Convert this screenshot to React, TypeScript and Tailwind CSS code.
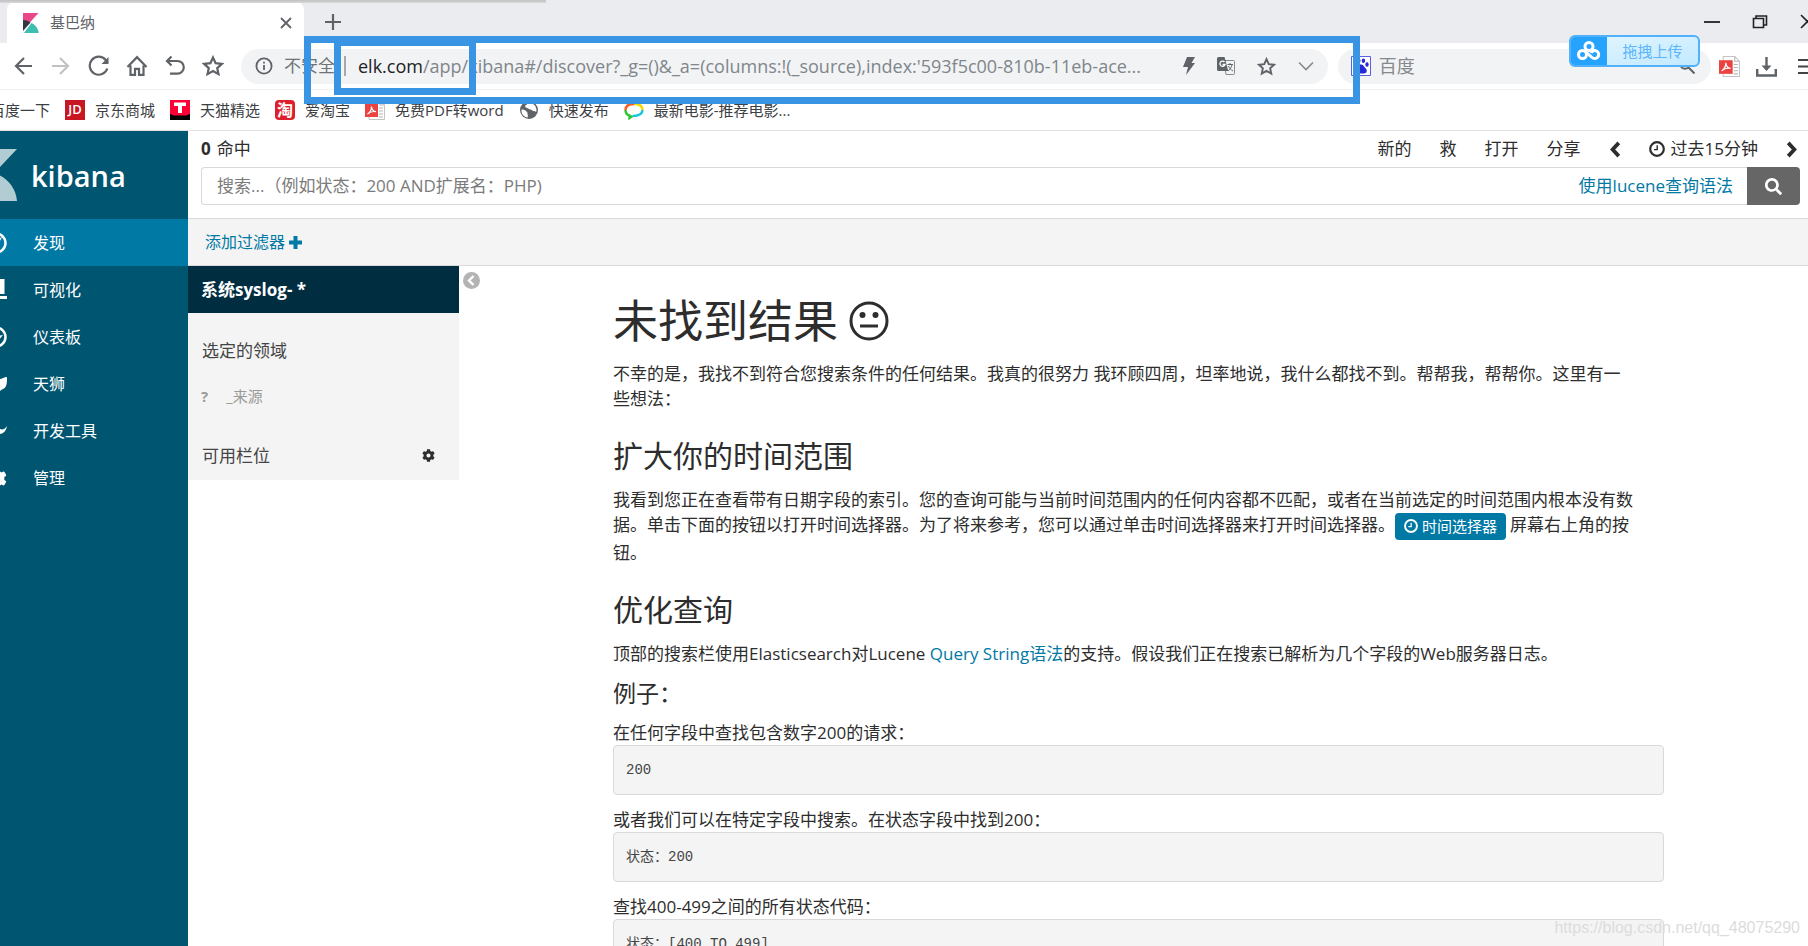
import type { ReactNode } from "react";
import { FaCog, FaSearch } from "react-icons/fa";

interface NavItem {
  label: string;
  icon: ReactNode;
}

interface Bookmark {
  label: string;
  icon: ReactNode;
}

interface Example {
  title: string;
  code: string;
}

/* ---------- shared icons ---------- */

function ClockIcon({ className }: { className: string }) {
  return (
    <svg viewBox="0 0 16 16" className={className} fill="none" stroke="currentColor" aria-hidden>
      <circle cx="8" cy="8" r="6.8" strokeWidth="2.2" />
      <path d="M8.2 4.2v4.4H5" strokeWidth="1.4" />
    </svg>
  );
}

function ChevronIcon({ direction }: { direction: "left" | "right" }) {
  return (
    <svg viewBox="0 0 12 18" className="h-[17px] w-3" fill="none" stroke="currentColor" strokeWidth="4" aria-hidden>
      <path d={direction === "left" ? "M10 2 3.5 9l6.5 7" : "m2 2 6.5 7L2 16"} />
    </svg>
  );
}

function PdfIcon({ className }: { className: string }) {
  return (
    <svg viewBox="0 0 20 20" className={className} aria-hidden>
      <path d="M4 .5h11L19.5 5v14.5H4z" fill="#fff" stroke="#c4c4c4" />
      <path d="M15 .5V5h4.5M14 8h4M14 11h4M14 14h4M14 17h4" fill="none" stroke="#b5b5b5" />
      <path d="M0 4h13v13H0z" fill="#ea4340" />
      <path d="M2.5 14c3-1.5 4-4.5 4-7.5.3 3 2 5 4.5 5.2-3-.6-6 .3-8.5 2.3z" fill="none" stroke="#fff" strokeWidth="1.2" />
    </svg>
  );
}

function StarIcon({ className }: { className: string }) {
  return (
    <svg viewBox="0 0 22 22" className={className} fill="none" stroke="currentColor" strokeWidth="2.2" aria-hidden>
      <path d="m11 2.5 2.6 5.7 6.2.7-4.6 4.2 1.3 6.1L11 16.1l-5.5 3.1 1.3-6.1L2.2 8.9l6.2-.7z" />
    </svg>
  );
}

/* ---------- browser chrome ---------- */

function TabStrip() {
  return (
    <div className="flex h-[43px] bg-[#ebecf0]">
      <div className="ml-[7px] mt-0.5 flex w-[297px] items-center rounded-t-lg bg-white pl-4 pr-3">
        <svg viewBox="0 0 16 20" className="h-5 w-4" aria-hidden>
          <path d="M0 0h15.5L5.5 11 0 7z" fill="#ea478b" />
          <path d="M0 7c3 0 5.5 1 7.5 2.5L0 18z" fill="#343741" />
          <path d="M1 20 8.5 10c4 2 6.7 5.5 7.2 10z" fill="#3ebeb0" />
        </svg>
        <span className="ml-[11px] text-[15px] text-[#606266]">基巴纳</span>
        <button type="button" aria-label="关闭标签页" className="ml-auto text-[#5f6368]">
          <svg viewBox="0 0 12 12" className="h-3 w-3" stroke="currentColor" strokeWidth="1.8">
            <path d="m1 1 10 10M11 1 1 11" />
          </svg>
        </button>
      </div>
      <button type="button" aria-label="新标签页" className="ml-[21px] text-[#5f6368]">
        <svg viewBox="0 0 16 16" className="h-4 w-4" stroke="currentColor" strokeWidth="2.2">
          <path d="M8 0v16M0 8h16" />
        </svg>
      </button>
      <div className="-mr-2 ml-auto flex items-center gap-8 text-[#222]">
        <button type="button" aria-label="最小化">
          <svg viewBox="0 0 16 16" className="h-4 w-4" stroke="currentColor" strokeWidth="1.8">
            <path d="M0 8h16" />
          </svg>
        </button>
        <button type="button" aria-label="还原">
          <svg viewBox="0 0 16 16" className="h-4 w-4" fill="none" stroke="currentColor" strokeWidth="1.6">
            <path d="M1.5 4.5h10v9h-10zM4 4V2h10.5v9H12" />
          </svg>
        </button>
        <button type="button" aria-label="关闭">
          <svg viewBox="0 0 16 16" className="h-4 w-4" stroke="currentColor" strokeWidth="1.6">
            <path d="m1 1 13 13M14 1 1 14" />
          </svg>
        </button>
      </div>
    </div>
  );
}

function HistoryButtons() {
  return (
    <div className="flex items-center gap-4 pl-3 text-[#5f6368]">
      <button type="button" aria-label="后退">
        <svg viewBox="0 0 22 22" className="h-[22px] w-[22px]" fill="none" stroke="currentColor" strokeWidth="2.2">
          <path d="M20 11H4M12 3l-8 8 8 8" />
        </svg>
      </button>
      <button type="button" aria-label="前进" className="text-[#c0c2c5]">
        <svg viewBox="0 0 22 22" className="h-[22px] w-[22px]" fill="none" stroke="currentColor" strokeWidth="2.2">
          <path d="M2 11h16M10 3l8 8-8 8" />
        </svg>
      </button>
      <button type="button" aria-label="刷新">
        <svg viewBox="0 0 22 22" className="h-[22px] w-[22px]" fill="none" stroke="currentColor" strokeWidth="2.2">
          <path d="M19.3 13.5a9 9 0 1 1-1.6-8.5l2 2.5" />
          <path d="M20.5 2v7h-7z" fill="currentColor" stroke="none" />
        </svg>
      </button>
      <button type="button" aria-label="主页">
        <svg viewBox="0 0 22 22" className="h-[22px] w-[22px]" fill="none" stroke="currentColor" strokeWidth="2.2">
          <path d="M1.5 12 11 2.2 20.5 12M4.5 10.5v9.3H9v-6h4v6h4.5v-9.3" />
        </svg>
      </button>
      <button type="button" aria-label="撤销">
        <svg viewBox="0 0 22 22" className="h-[22px] w-[22px]" fill="none" stroke="currentColor" strokeWidth="2.2">
          <path d="M3 6h10.5a6.3 6.3 0 0 1 0 12.6H6M7.5 1.5 3 6l4.5 4.5" />
        </svg>
      </button>
      <button type="button" aria-label="收藏夹">
        <StarIcon className="h-[22px] w-[22px]" />
      </button>
    </div>
  );
}

function AddressBar() {
  return (
    <div className="ml-[17px] flex h-[35px] flex-[1055] items-center rounded-full bg-[#f1f3f4] px-[14px] text-[18px] text-[#80868b]">
      <svg viewBox="0 0 18 18" className="h-[18px] w-[18px] shrink-0" fill="none" stroke="#5f6368" strokeWidth="1.8" aria-hidden>
        <circle cx="9" cy="9" r="7.6" />
        <path d="M9 8v5M9 4.8v1.8" />
      </svg>
      <span className="ml-[11px] shrink-0 text-[17px] text-[#6f7377]">不安全</span>
      <span className="ml-[9px] h-5 w-0.5 shrink-0 bg-[#a5a8ac]" />
      <label htmlFor="url" className="ml-3 shrink-0 text-[#202124]">
        elk.com
      </label>
      <input
        id="url"
        className="min-w-0 flex-1 bg-transparent outline-none"
        defaultValue="/app/kibana#/discover?_g=()&_a=(columns:!(_source),index:'593f5c00-810b-11eb-ace..."
      />
      <div className="flex shrink-0 items-center gap-[22px] text-[#5f6368]">
        <svg viewBox="0 0 12 18" className="h-[18px] w-3" aria-hidden>
          <path d="M4 0h8L8.5 6H12L3 18l2-8H0z" fill="currentColor" />
        </svg>
        <button type="button" aria-label="翻译">
          <svg viewBox="0 0 18 18" className="h-[18px] w-[18px]">
            <path d="M7 3.5h9.5a1 1 0 0 1 1 1v12a1 1 0 0 1-1 1H9z" fill="none" stroke="#85898d" />
            <path d="M1.5 0h6l3.8 14H1.5A1.5 1.5 0 0 1 0 12.5v-11A1.5 1.5 0 0 1 1.5 0z" fill="#5f6368" />
            <path d="M7.5 5A2.6 2.6 0 1 0 8 7.5H5.5" fill="none" stroke="#fff" strokeWidth="1.3" />
            <path d="M10.5 7.5h5.5M13 6v1.5M15 7.5c-.5 3-2 5-4 6.5M11.5 9c1 2.5 2.5 4 4.5 5" fill="none" stroke="#5f6368" />
          </svg>
        </button>
        <button type="button" aria-label="收藏">
          <StarIcon className="h-[19px] w-[19px]" />
        </button>
        <button type="button" aria-label="展开">
          <svg viewBox="0 0 16 16" className="h-4 w-4" fill="none" stroke="#85898d" strokeWidth="1.6">
            <path d="m1 4.5 7 7 7-7" />
          </svg>
        </button>
      </div>
    </div>
  );
}

function WebSearch() {
  return (
    <div className="ml-2.5 flex h-[35px] flex-[343] items-center rounded-full bg-[#f1f3f4] pl-[13px] pr-4">
      <svg viewBox="0 0 20 20" className="h-5 w-5 shrink-0" aria-hidden>
        <path d="M.5.5h19v19H.5z" fill="#fff" stroke="#5a5fe8" />
        <g fill="#2529d8">
          <ellipse cx="4" cy="8.5" rx="1.7" ry="2.3" />
          <ellipse cx="7.8" cy="4.8" rx="1.7" ry="2.3" />
          <ellipse cx="12.4" cy="4.8" rx="1.7" ry="2.3" />
          <ellipse cx="16" cy="8.5" rx="1.7" ry="2.3" />
          <path d="M10 8.5c2.5 0 3 2.5 4.8 4 2 2 .8 5-1.8 5H7c-2.6 0-3.8-3-1.8-5 1.8-1.5 2.3-4 4.8-4z" />
        </g>
      </svg>
      <input
        aria-label="百度"
        placeholder="百度"
        className="ml-2 min-w-0 flex-1 bg-transparent text-[18px] outline-none placeholder:text-[#85888c]"
      />
      <button type="button" aria-label="搜索" className="text-[#5f6368]">
        <svg viewBox="0 0 16 16" className="h-4 w-4" fill="none" stroke="currentColor" strokeWidth="2">
          <circle cx="6" cy="6" r="4.8" />
          <path d="m9.5 9.5 6 6" />
        </svg>
      </button>
    </div>
  );
}

const bookmarks: Bookmark[] = [
  {
    label: "京东商城",
    icon: (
      <span className="flex h-5 w-5 items-center justify-center bg-[#c81623] text-[13px] font-semibold text-white">JD</span>
    ),
  },
  {
    label: "天猫精选",
    icon: (
      <svg viewBox="0 0 20 20" className="h-5 w-5" aria-hidden>
        <path d="M0 0h20v20H0z" fill="#ff0036" />
        <path d="M0 14c2 0 2 1.500 4 1.500h12c2 0 2-1.500 4-1.500v6H0z" fill="#000" />
        <path d="M4 2.500h12v3.500h-4V13H8V6H4z" fill="#fff" />
      </svg>
    ),
  },
  {
    label: "爱淘宝",
    icon: (
      <span className="flex h-5 w-5 items-center justify-center rounded-sm bg-[#dd1f2b] text-[16px] font-bold text-white">
        淘
      </span>
    ),
  },
  { label: "免费PDF转word", icon: <PdfIcon className="h-5 w-5" /> },
  {
    label: "快速发布",
    icon: (
      <svg viewBox="0 0 20 20" className="h-5 w-5" aria-hidden>
        <circle cx="10" cy="10" r="9" fill="#5f6368" />
        <path d="M2.500 9.500c2.500 0 3.500.5 5 2s1 1.500 1 2.500 1 1.500 0 3.500c-4-.6-6.500-4-6-8z" fill="#fff" />
        <path d="M10 2.500c-2 1-1.500 2-3 2.500s-1 2.500 1 3 2 1.500 3.500 1.500 1.500 1.500 3 1.500 1.500 1 3 .5c.5-5-3-8.500-7.500-9z" fill="#fff" />
      </svg>
    ),
  },
  {
    label: "最新电影-推荐电影...",
    icon: (
      <svg viewBox="0 0 20 20" className="h-5 w-5" fill="none" strokeWidth="2.4" aria-hidden>
        <path d="M10 4C5 4 1.5 6 1.5 10" stroke="#ff5a1f" />
        <path d="M10 4c5 0 8.5 2 8.5 6" stroke="#f5d800" />
        <path d="M1.5 10c0 3 2 5 4 5.5V18l3-2" stroke="#2fc52f" />
        <path d="M18.5 10c0 4-4 6-10 6" stroke="#14c8d8" />
      </svg>
    ),
  },
];

function BookmarkBar() {
  return (
    <nav className="flex h-[41px] items-center gap-[15px] whitespace-nowrap border-b border-[#dfe0e1] text-[15px] text-[#3c4043]">
      <a href="#baidu" className="-ml-2.5">
        百度一下
      </a>
      {bookmarks.map((item) => (
        <a key={item.label} href="#bookmark" className="flex items-center gap-2.5">
          {item.icon}
          <span>{item.label}</span>
        </a>
      ))}
    </nav>
  );
}

function BrowserChrome() {
  return (
    <header className="relative shrink-0">
      <TabStrip />
      <div className="flex h-[47px] items-center border-b border-[#eff0f1]">
        <HistoryButtons />
        <AddressBar />
        <WebSearch />
        <div className="-mr-2.5 ml-2 flex items-center gap-4 text-[#5f6368]">
          <PdfIcon className="h-[21px] w-[21px]" />
          <button type="button" aria-label="下载">
            <svg viewBox="0 0 21 21" className="h-[21px] w-[21px]" fill="none" stroke="currentColor" strokeWidth="2.4">
              <path d="M1.2 13v6.5h18.6V13M10.5 1v13" />
              <path d="M5.5 9.5h10l-5 5.5z" fill="currentColor" stroke="none" />
            </svg>
          </button>
          <button type="button" aria-label="菜单" className="ml-1">
            <svg viewBox="0 0 21 21" className="h-[21px] w-[21px]" stroke="#444" strokeWidth="2">
              <path d="M1 4h20M1 10.5h20M1 17h20" />
            </svg>
          </button>
        </div>
      </div>
      <BookmarkBar />

      {/* Highlight frames drawn over the address bar */}
      <div className="pointer-events-none absolute left-[304px] top-9 h-[68px] w-[1056px] border-[7px] border-[#3a94e4]" />
      <div className="pointer-events-none absolute left-[334px] top-[39px] h-14 w-[142px] border-[7px] border-[#3a94e4]" />

      {/* Shadow of a window that lies above the tab strip */}
      <div className="absolute left-0 top-0 h-[3px] w-[546px] bg-linear-to-b from-[#c0c0c0] to-[#d9d9db]" />

      {/* Floating upload widget */}
      <button
        type="button"
        className="absolute right-[108px] top-[35px] flex h-8 w-[131px] overflow-hidden rounded-md border-2 border-[#52b1fa] bg-linear-to-br from-[#e4f6ff] to-[#c2e9ff] text-[15px] text-[#5cb6fb]"
      >
        <span className="flex h-full w-9 items-center justify-center bg-[#26a2ff]">
          <svg viewBox="0 0 24 20" className="h-5 w-6" fill="none" stroke="#fff" strokeWidth="3" aria-hidden>
            <circle cx="12" cy="5.5" r="4" />
            <circle cx="5.5" cy="13.5" r="4" />
            <path d="M14 12a4 4 0 1 1 1 4.5L9 11" />
          </svg>
        </span>
        <span className="flex-1 self-center">拖拽上传</span>
      </button>
    </header>
  );
}

/* ---------- kibana ---------- */

const navItems: NavItem[] = [
  {
    label: "发现",
    icon: (
      <>
        <circle cx="11" cy="11" r="9.5" fill="none" stroke="currentColor" strokeWidth="2.5" />
        <path d="m17 5-4 8-8 4 4-8z" />
      </>
    ),
  },
  { label: "可视化", icon: <path d="M0 17h22v3H0zM1 8h4v7H1zM7 4h4v11H7zM13 0h6.5v15H13z" /> },
  {
    label: "仪表板",
    icon: (
      <>
        <circle cx="11" cy="11" r="9.5" fill="none" stroke="currentColor" strokeWidth="2.5" />
        <path d="m10 14 2-4 6-1-5 6z" />
      </>
    ),
  },
  { label: "天狮", icon: <path d="M0 5c3 0 4 1 6 1h9c2 0 4-2 7-2 0 6 0 10-4 12-2 1-4 3-7 4-3-1-5-3-7-4-4-2-4-6-4-11z" /> },
  { label: "开发工具", icon: <path d="M13 1a8 8 0 0 0-4 9L1 18l3 3 8-7c5 1 9-2 10-8-2 3-4 4-7 3z" /> },
  { label: "管理", icon: <FaCog x="1" y="1" size={21} /> },
];

function Sidebar() {
  return (
    <aside className="flex w-[188px] shrink-0 flex-col overflow-hidden bg-[#005571] text-white">
      <div className="flex h-[88px] items-center">
        <svg viewBox="0 0 40 52" className="-ml-[23px] h-[52px] w-10" fill="#b2ccd4" aria-hidden>
          <path d="M0 0h40L22 19 0 16zM2 52 22 26c10 5 17 14 18 26z" />
          <path d="M0 18c8 0 15 2 20 6L0 48z" fill="#8fb4c0" />
        </svg>
        <span className="ml-3.5 text-[29px] font-semibold leading-none">kibana</span>
      </div>
      <nav>
        {navItems.map((item, index) => (
          <a
            key={item.label}
            href={`#nav-${index}`}
            className={`flex h-[47px] items-center text-[16px] ${index === 0 ? "bg-[#0079a5]" : ""}`}
          >
            <svg viewBox="0 0 22 22" className="-ml-[15px] mr-[26px] h-[22px] w-[22px] shrink-0" fill="currentColor" aria-hidden>
              {item.icon}
            </svg>
            {item.label}
          </a>
        ))}
      </nav>
    </aside>
  );
}

function QueryBar() {
  return (
    <div className="h-[88px] shrink-0 border-b border-[#d9d9d9] pl-[13px] pr-2">
      <div className="flex h-9 items-center text-[17px] text-[#2d2d2d]">
        <strong className="mr-1.5 font-bold">0</strong>
        <span>命中</span>
        <div className="ml-auto flex items-center gap-7">
          <button type="button">新的</button>
          <button type="button">救</button>
          <button type="button">打开</button>
          <button type="button">分享</button>
          <button type="button" aria-label="上一个时间段">
            <ChevronIcon direction="left" />
          </button>
          <button type="button" className="flex items-center gap-1.5">
            <ClockIcon className="h-4 w-4" />
            过去15分钟
          </button>
          <button type="button" aria-label="下一个时间段" className="mr-0.5">
            <ChevronIcon direction="right" />
          </button>
        </div>
      </div>
      <form className="flex h-[38px] text-[17px]">
        <div className="flex flex-1 items-center rounded-l border border-r-0 border-[#d9d9d9] pl-[15px] pr-[14px]">
          <input
            aria-label="搜索"
            placeholder="搜索...（例如状态：200 AND扩展名：PHP)"
            className="min-w-0 flex-1 outline-none placeholder:text-[#7b7b7b]"
          />
          <a href="#lucene" className="text-[#0079a5]">
            使用lucene查询语法
          </a>
        </div>
        <button
          type="button"
          aria-label="提交"
          className="flex w-[53px] items-center justify-center rounded-r bg-[#666] text-white"
        >
          <FaSearch size={17} />
        </button>
      </form>
    </div>
  );
}

function FieldList() {
  return (
    <section className="w-[271px] shrink-0 self-start bg-[#f4f4f4] text-[17px] text-[#444]">
      <h2 className="flex h-[47px] items-center bg-[#002d40] pl-[13px] font-bold text-white">系统syslog- *</h2>
      <h3 className="mt-[25px] pl-[14px] leading-[25px]">选定的领域</h3>
      <div className="mt-[21px] flex items-center gap-[18px] pl-[13px] text-[15px] leading-[25px] text-[#9a9a9a]">
        <span className="font-bold">?</span>
        <span>_来源</span>
      </div>
      <div className="mt-[34px] flex items-center pb-3 pl-[14px] pr-6 leading-[25px]">
        <h3>可用栏位</h3>
        <button type="button" aria-label="字段设置" className="ml-auto text-[#2d2d2d]">
          <FaCog size={13} />
        </button>
      </div>
    </section>
  );
}

const examples: Example[] = [
  { title: "在任何字段中查找包含数字200的请求：", code: "200" },
  { title: "或者我们可以在特定字段中搜索。在状态字段中找到200：", code: "状态：200" },
  { title: "查找400-499之间的所有状态代码：", code: "状态：[400 TO 499]" },
];

function NoResults() {
  return (
    <article className="min-w-0 flex-1 pl-[133px] pr-36 pt-[30px] text-[17px] leading-[25px] text-[#2d2d2d]">
      <h1 className="flex items-center gap-[11px] text-[45px] leading-[50px]">
        未找到结果
        <svg viewBox="0 0 40 40" className="h-10 w-10" fill="none" stroke="currentColor" strokeWidth="3" aria-hidden>
          <circle cx="20" cy="20" r="18" />
          <path d="M11 25h18" />
          <circle cx="13.5" cy="14" r="3" fill="currentColor" stroke="none" />
          <circle cx="26.5" cy="14" r="3" fill="currentColor" stroke="none" />
        </svg>
      </h1>
      <p className="mt-[15px] pr-7">
        不幸的是，我找不到符合您搜索条件的任何结果。我真的很努力
        我环顾四周，坦率地说，我什么都找不到。帮帮我，帮帮你。这里有一些想法：
      </p>

      <h2 className="mt-7 text-[30px] leading-[33px]">扩大你的时间范围</h2>
      <p className="mt-[15px] pr-7">
        我看到您正在查看带有日期字段的索引。您的查询可能与当前时间范围内的任何内容都不匹配，或者在当前选定的时间范围内根本没有数据。单击下面的按钮以打开时间选择器。为了将来参考，您可以通过单击时间选择器来打开时间选择器。
        <button
          type="button"
          className="mr-1 inline-flex h-[27px] items-center gap-1 rounded bg-[#0079a5] px-[9px] align-middle text-[15px] text-white"
        >
          <ClockIcon className="h-[14px] w-[14px]" />
          时间选择器
        </button>
        屏幕右上角的按钮。
      </p>

      <h2 className="mt-7 text-[30px] leading-[33px]">优化查询</h2>
      <p className="mt-[15px]">
        顶部的搜索栏使用Elasticsearch对Lucene{" "}
        <a href="#query-string" className="text-[#0079a5]">
          Query String语法
        </a>
        的支持。假设我们正在搜索已解析为几个字段的Web服务器日志。
      </p>
      <h3 className="mt-[15px] text-[23px]">例子：</h3>
      <div className="mt-[14px] flex flex-col gap-3">
        {examples.map((example) => (
          <div key={example.title}>
            <p>{example.title}</p>
            <pre className="rounded border border-[#d9d9d9] bg-[#f4f4f4] p-3 font-['Liberation_Mono','Noto_Sans_CJK_SC',monospace] text-[14px] leading-6 text-[#444]">
              {example.code}
            </pre>
          </div>
        ))}
      </div>
    </article>
  );
}

function Discover() {
  return (
    <main className="flex min-w-0 flex-1 flex-col">
      <QueryBar />
      <div className="flex h-[47px] shrink-0 items-center border-b border-[#d9d9d9] bg-[#f4f4f4] pl-[17px]">
        <button type="button" className="flex items-center gap-1 text-[16px] text-[#0079a5]">
          添加过滤器
          <svg viewBox="0 0 13 13" className="h-[13px] w-[13px]" fill="currentColor" aria-hidden>
            <path d="M4.5 0h4v4.5H13v4H8.5V13h-4V8.5H0v-4h4.5z" />
          </svg>
        </button>
      </div>
      <div className="flex">
        <FieldList />
        <button type="button" aria-label="折叠字段列表" className="ml-1 mt-1.5 self-start">
          <svg viewBox="0 0 17 17" className="h-[17px] w-[17px]" aria-hidden>
            <circle cx="8.5" cy="8.5" r="8.5" fill="#b4b4b4" />
            <path d="M10.5 4 6 8.5l4.5 4.5" fill="none" stroke="#fff" strokeWidth="2.4" />
          </svg>
        </button>
        <NoResults />
      </div>
    </main>
  );
}

export default function App() {
  return (
    <div className="relative flex h-screen flex-col overflow-hidden bg-white font-['Open_Sans','Noto_Sans_CJK_SC',sans-serif]">
      <BrowserChrome />
      <div className="flex min-h-0 flex-1 overflow-hidden">
        <Sidebar />
        <Discover />
      </div>
      <span className="absolute bottom-1.5 right-2 font-['Liberation_Sans',sans-serif] text-[16px] text-[#dcdcdc]">
        https://blog.csdn.net/qq_48075290
      </span>
    </div>
  );
}
